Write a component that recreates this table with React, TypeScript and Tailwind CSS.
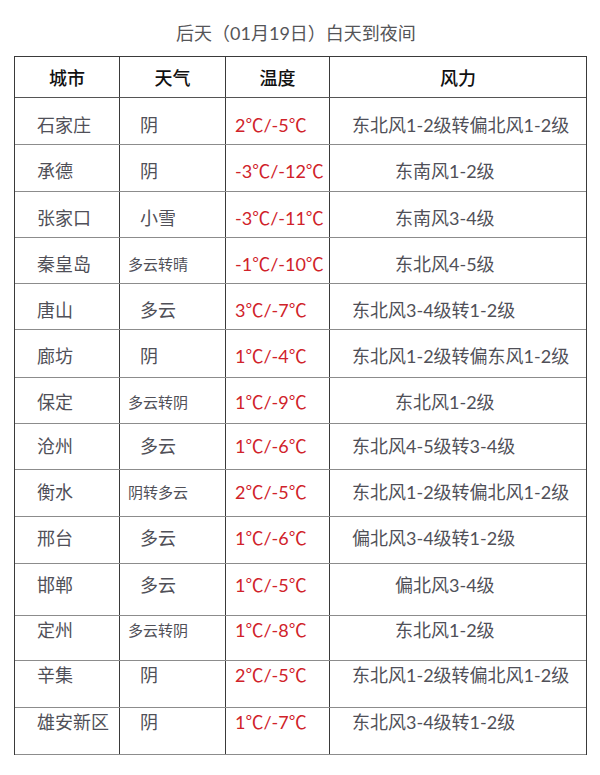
import React from "react";

type Row = {
  city: string;
  weather: string;
  small: boolean;
  temp: string;
  wind: string;
  far: boolean;
  h: string;
  pt: string;
};

const rows: Row[] = [
  { city: "石家庄", weather: "阴", small: false, temp: "2℃/-5℃", wind: "东北风1-2级转偏北风1-2级", far: false, h: "h-[47px]", pt: "pt-[18px]" },
  { city: "承德", weather: "阴", small: false, temp: "-3℃/-12℃", wind: "东南风1-2级", far: true, h: "h-[47px]", pt: "pt-[17px]" },
  { city: "张家口", weather: "小雪", small: false, temp: "-3℃/-11℃", wind: "东南风3-4级", far: true, h: "h-[46px]", pt: "pt-[17px]" },
  { city: "秦皇岛", weather: "多云转晴", small: true, temp: "-1℃/-10℃", wind: "东北风4-5级", far: true, h: "h-[46px]", pt: "pt-[17px]" },
  { city: "唐山", weather: "多云", small: false, temp: "3℃/-7℃", wind: "东北风3-4级转1-2级", far: false, h: "h-[46px]", pt: "pt-[17px]" },
  { city: "廊坊", weather: "阴", small: false, temp: "1℃/-4℃", wind: "东北风1-2级转偏东风1-2级", far: false, h: "h-[48px]", pt: "pt-[17px]" },
  { city: "保定", weather: "多云转阴", small: true, temp: "1℃/-9℃", wind: "东北风1-2级", far: true, h: "h-[46px]", pt: "pt-[15px]" },
  { city: "沧州", weather: "多云", small: false, temp: "1℃/-6℃", wind: "东北风4-5级转3-4级", far: false, h: "h-[46px]", pt: "pt-[13px]" },
  { city: "衡水", weather: "阴转多云", small: true, temp: "2℃/-5℃", wind: "东北风1-2级转偏北风1-2级", far: false, h: "h-[47px]", pt: "pt-[13px]" },
  { city: "邢台", weather: "多云", small: false, temp: "1℃/-6℃", wind: "偏北风3-4级转1-2级", far: false, h: "h-[47px]", pt: "pt-[12px]" },
  { city: "邯郸", weather: "多云", small: false, temp: "1℃/-5℃", wind: "偏北风3-4级", far: true, h: "h-[52px]", pt: "pt-[12px]" },
  { city: "定州", weather: "多云转阴", small: true, temp: "1℃/-8℃", wind: "东北风1-2级", far: true, h: "h-[45px]", pt: "pt-[5px]" },
  { city: "辛集", weather: "阴", small: false, temp: "2℃/-5℃", wind: "东北风1-2级转偏北风1-2级", far: false, h: "h-[47px]", pt: "pt-[5px]" },
  { city: "雄安新区", weather: "阴", small: false, temp: "1℃/-7℃", wind: "东北风3-4级转1-2级", far: false, h: "h-[47px]", pt: "pt-[5px]" },
];

const font = "font-['Lato','Noto_Sans_CJK_SC',sans-serif]";

export default function App() {
  return (
    <div className={`w-[600px] h-[775px] bg-white ${font}`}>
      <div className="h-[56px] pt-[24px] pr-[8px] flex justify-center text-[18px] leading-[18px] text-[#555558] whitespace-nowrap">
        后天（01月19日）白天到夜间
      </div>
      <div className="ml-[14px] w-[573px] border-x border-[#3a3a3a]">
        <div className="flex h-[42px] border-y border-t-[#3a3a3a] border-b-[#555] text-[18px] leading-[18px] text-[#111] font-medium">
          <div className="w-[105px] shrink-0 border-r border-[#3a3a3a] flex items-center justify-center pt-[1px]">城市</div>
          <div className="w-[106px] shrink-0 border-r border-[#3a3a3a] flex items-center justify-center pt-[1px]">天气</div>
          <div className="w-[104px] shrink-0 border-r border-[#3a3a3a] flex items-center justify-center pt-[1px]">温度</div>
          <div className="flex-1 flex items-center justify-center pt-[1px]">风力</div>
        </div>
        {rows.map((r) => (
          <div key={r.city} className={`flex ${r.h} border-b border-[#8c8c8c] text-[18px] leading-[18px] text-[#505058] whitespace-nowrap`}>
            <div className={`w-[105px] shrink-0 border-r border-[#3a3a3a] pl-[22px] ${r.pt}`}>{r.city}</div>
            <div className={`w-[106px] shrink-0 border-r border-[#3a3a3a] ${r.pt} ${r.small ? "pl-[8px] text-[15px]" : "pl-[20px]"}`}>
              {r.weather}
            </div>
            <div className={`w-[104px] shrink-0 border-r border-[#3a3a3a] pl-[9px] text-[#d0222a] ${r.pt}`}>{r.temp}</div>
            <div className={`flex-1 ${r.pt} ${r.far ? "pl-[65px]" : "pl-[22px]"}`}>{r.wind}</div>
          </div>
        ))}
      </div>
    </div>
  );
}
